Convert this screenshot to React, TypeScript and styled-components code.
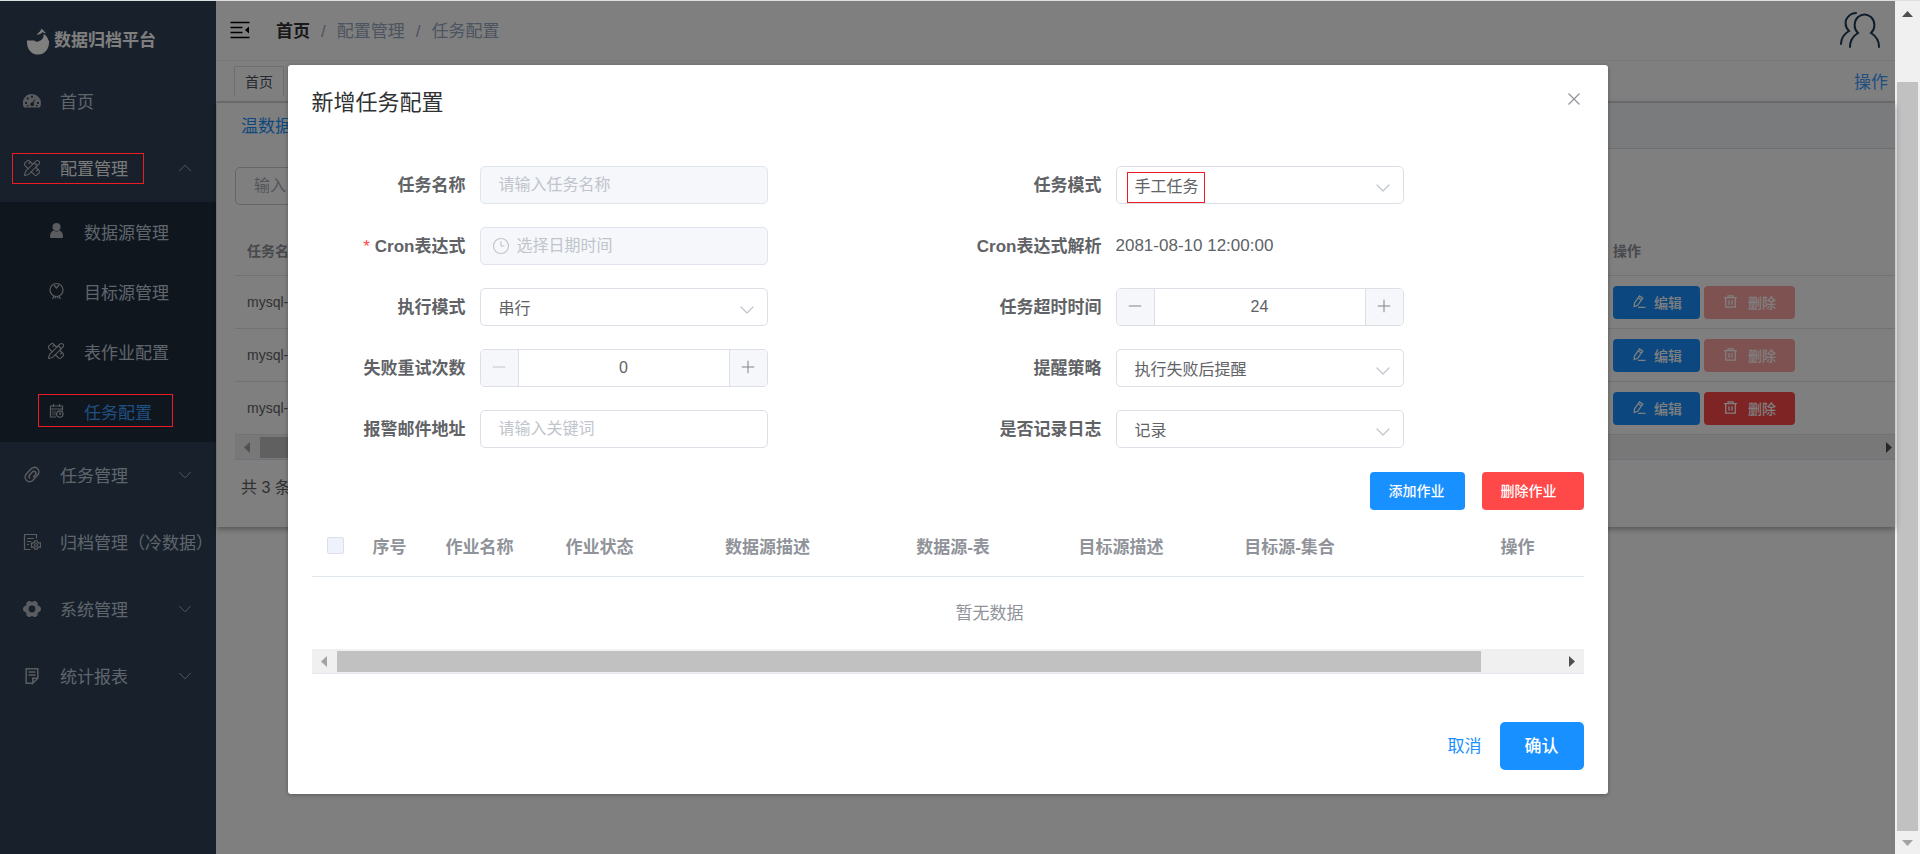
import React from "react";
import styled, { createGlobalStyle, css } from "styled-components";
import { ChevronDown, ChevronUp, PencilRuler, Minus, Plus, Clock3 } from "lucide-react";

const GlobalStyle = createGlobalStyle`
  * { box-sizing: border-box; }
  body {
    margin: 0;
    background: #dcdfdf;
    font-family: "Liberation Sans", "Noto Sans CJK SC", sans-serif;
    font-size: 17px;
    color: #606266;
  }
  button, input, select { font-family: inherit; margin: 0; }
  button { cursor: pointer; }
  a { text-decoration: none; }
  svg { display: block; flex: none; }
`;

/* ---------- page frame ---------- */

const Frame = styled.div`
  display: flex;
  min-height: 100vh;
  padding-top: 1px;
`;

const Viewport = styled.div`
  position: relative;
  flex: 1;
  min-width: 0;
  display: flex;
  background: #fff;
`;

const PageScroll = styled.div`
  width: 25px;
  display: flex;
  flex-direction: column;
  align-items: center;
  padding: 10px 2px 8px;
  background: #f0f0f0;
`;

const PageThumb = styled.div`
  width: 100%;
  flex: 1;
  margin: 65px 0 9px;
  background: #c1c1c1;
`;

const Mark = styled.span<{ $left: number; $top: number; $width: number; $height: number }>`
  position: absolute;
  z-index: 20;
  left: ${(p) => p.$left}px;
  top: ${(p) => p.$top}px;
  width: ${(p) => p.$width}px;
  height: ${(p) => p.$height}px;
  border: 1px solid #ed1c24;
  pointer-events: none;
`;

/* ---------- sidebar ---------- */

const Sidebar = styled.nav`
  width: 216px;
  flex: none;
  background: #304156;
`;

const Logo = styled.div`
  display: flex;
  align-items: center;
  gap: 4px;
  height: 67px;
  padding: 12px 0 0 27px;
  line-height: 26px;
  font-weight: 700;
  color: #fff;
  & > svg { align-self: flex-start; margin-top: 15px; }
`;

const MenuList = styled.ul`
  margin: 0;
  padding: 0;
  list-style: none;
`;

const SubList = styled(MenuList)`
  background: #1f2d3d;
`;

const MenuLink = styled.a<{ $sub?: boolean; $tone?: "open" | "active" }>`
  position: relative;
  display: flex;
  align-items: center;
  height: ${(p) => (p.$sub ? 60 : 67)}px;
  padding: 0 20px 2px ${(p) => (p.$sub ? 47 : 23)}px;
  color: ${(p) => (p.$tone === "active" ? "#409eff" : p.$tone === "open" ? "#f4f4f5" : "#bfcbd9")};
  white-space: nowrap;
  & > svg { color: #b4b8be; }
`;

const MenuText = styled.span`
  flex: 1;
  padding-left: 19px;
`;

/* ---------- top bar ---------- */

const Main = styled.main`
  flex: 1;
  min-width: 0;
`;

const TopBar = styled.header`
  display: flex;
  align-items: center;
  height: 60px;
  padding: 0 15px 2px 14px;
  border-bottom: 1px solid #f0f1f2;
`;

const IconButton = styled.button`
  display: flex;
  padding: 0;
  border: 0;
  background: none;
  color: inherit;
`;

const Crumbs = styled.div`
  flex: 1;
  display: flex;
  align-items: baseline;
  gap: 11px;
  padding-left: 26px;
  color: #97a8be;
`;

const CrumbHome = styled.a`
  font-weight: 700;
  color: #303133;
`;

const TabBar = styled.div`
  display: flex;
  justify-content: space-between;
  height: 42px;
  padding: 5px 7px 0 18px;
  border-bottom: 2px solid #dfe0e6;
`;

const PageTab = styled.a`
  height: 30px;
  padding: 0 10px;
  border: 1px solid #d8dce5;
  border-bottom: 0;
  font-size: 14px;
  line-height: 31px;
  color: #495060;
`;

const BlueLink = styled.a`
  line-height: 34px;
  color: #409eff;
`;

/* ---------- background card ---------- */

const Card = styled.section`
  border-left: 1px solid #dcdfe6;
  box-shadow: 0 2px 6px rgba(0, 0, 0, 0.35);
`;

const CardTabs = styled.div`
  height: 46px;
  border-bottom: 1px solid #dcdfe6;
  background: #f5f7fa;
`;

const CardTab = styled.a`
  display: block;
  width: 160px;
  height: 46px;
  padding-left: 24px;
  background: #fff;
  line-height: 48px;
  color: #1890ff;
`;

const CardBody = styled.div`
  padding: 18px 0 0 18px;
`;

const controlBox = css`
  width: 100%;
  height: 38px;
  border: 1px solid #dcdfe6;
  border-radius: 5px;
  background: #fff;
  font-size: 16px;
  color: #606266;
  outline: 0;
  &::placeholder { color: #c0c4cc; opacity: 1; }
`;

const SearchInput = styled.input`
  ${controlBox}
  display: block;
  width: 240px;
  padding: 0 18px;
  border-color: #c6cad2;
  &::placeholder { color: #a8abb2; }
`;

const TaskTable = styled.table`
  width: 100%;
  margin-top: 22px;
  border-collapse: separate;
  border-spacing: 0;
  table-layout: fixed;
  font-size: 14px;
  text-align: left;
  th { height: 49px; padding: 0 12px 2px; border-bottom: 1px solid #dfe6ec; color: #909399; font-weight: 700; }
  td { height: 53px; padding: 0 12px; border-bottom: 1px solid #dfe6ec; }
  th:last-child { width: 297px; padding: 0 15px 2px; }
  td:last-child { padding: 0 15px; }
`;

const ButtonRow = styled.div`
  display: flex;
  gap: 4px;
`;

const RowButton = styled.button<{ $danger?: boolean }>`
  display: flex;
  align-items: center;
  gap: ${(p) => (p.$danger ? 11 : 8)}px;
  height: 33px;
  padding: 0 ${(p) => (p.$danger ? 19 : 18)}px 1px 20px;
  border: 0;
  border-radius: 4px;
  background: ${(p) => (p.$danger ? "#ff4949" : "#1890ff")};
  color: #fff;
  font-size: 14px;
  font-weight: 500;
  &:disabled { background: #ffa4a4; }
`;

const PageInfo = styled.p`
  margin: 0;
  height: 67px;
  padding: 17px 6px 0;
  font-size: 16px;
  line-height: 22px;
`;

/* ---------- horizontal scroll bar ---------- */

const HScroll = styled.div<{ $end: number }>`
  display: flex;
  align-items: center;
  justify-content: space-between;
  height: 25px;
  padding: 0 ${(p) => p.$end}px 0 9px;
  border-bottom: 1px solid #e4e7f4;
  background: #f0f0f0;
`;

const HTrack = styled.div`
  flex: 1;
  margin: 0 27px 0 10px;
`;

const HThumb = styled.div<{ $share: number }>`
  width: ${(p) => p.$share}%;
  height: 21px;
  background: #c1c1c1;
`;

/* ---------- dialog ---------- */

const Overlay = styled.div`
  position: absolute;
  inset: 0;
  z-index: 10;
  padding: 64px 24px 24px;
  background: rgba(0, 0, 0, 0.5);
`;

const Dialog = styled.div`
  max-width: 1320px;
  margin: 0 auto;
  padding: 24px;
  border-radius: 3px;
  background: #fff;
  box-shadow: 0 1px 4px rgba(0, 0, 0, 0.3);
`;

const DialogHead = styled.div`
  display: flex;
  justify-content: space-between;
  align-items: flex-start;
  height: 77px;
  color: #909399;
`;

const DialogTitle = styled.h2`
  margin: 0;
  font-size: 22px;
  line-height: 27px;
  font-weight: 400;
  color: #303133;
`;

const Form = styled.form`
  display: grid;
  grid-template-columns: 1fr 1fr;
  row-gap: 23px;
`;

const Field = styled.div`
  display: flex;
  align-items: center;
  height: 38px;
`;

const FieldLabel = styled.label<{ $required?: boolean }>`
  width: 168px;
  padding: 0 14px 4px 0;
  text-align: right;
  font-weight: 700;
  white-space: nowrap;
  ${(p) => p.$required && css`&::before { content: "*"; margin-right: 5px; color: #ff4949; font-weight: 400; }`}
`;

const Control = styled.div`
  position: relative;
  width: 288px;
  & > svg { position: absolute; top: 10px; color: #c0c4cc; pointer-events: none; }
`;

const TextInput = styled.input<{ $icon?: boolean }>`
  ${controlBox}
  display: block;
  padding: 0 18px 0 ${(p) => (p.$icon ? 36 : 18)}px;
  &:disabled { background: #f5f7fa; border-color: #dfe4ed; }
`;

const SelectBox = styled.select`
  ${controlBox}
  display: block;
  appearance: none;
  padding: 2px 36px 0 18px;
`;

const SelectIcon = styled(ChevronDown)`
  right: 9px;
`;

const ClockIcon = styled(Clock3)`
  left: 12px;
`;

const Stepper = styled.div`
  display: flex;
  width: 288px;
  height: 38px;
  border: 1px solid #dcdfe6;
  border-radius: 5px;
  overflow: hidden;
`;

const StepButton = styled.button<{ $side: "left" | "right" }>`
  display: flex;
  align-items: center;
  justify-content: center;
  width: 38px;
  padding: 0 0 2px;
  border: 0;
  border-${(p) => (p.$side === "left" ? "right" : "left")}: 1px solid #dcdfe6;
  background: #f5f7fa;
  color: #808388;
  &:disabled { color: #c0c4cc; }
`;

const StepInput = styled.input`
  flex: 1;
  min-width: 0;
  padding: 0;
  border: 0;
  outline: 0;
  background: #fff;
  font-size: 16px;
  text-align: center;
  color: #606266;
`;

const Actions = styled.div`
  display: flex;
  justify-content: flex-end;
  gap: 17px;
  margin-top: 24px;
`;

const JobButton = styled.button<{ $danger?: boolean }>`
  height: 38px;
  padding: 0 ${(p) => (p.$danger ? 27 : 20)}px 2px 19px;
  border: 0;
  border-radius: 4px;
  background: ${(p) => (p.$danger ? "#ff4949" : "#1890ff")};
  color: #fff;
  font-size: 14px;
  font-weight: 500;
`;

const TableClip = styled.div`
  margin-top: 8px;
  overflow: hidden;
`;

const JobTable = styled.table`
  width: 1356px;
  border-collapse: separate;
  border-spacing: 0;
  table-layout: fixed;
  color: #909399;
  th { height: 59px; padding: 0 0 3px; border-bottom: 1px solid #dfe6ec; text-align: center; font-weight: 700; }
  td { height: 72px; padding: 0 0 4px; text-align: center; }
`;

const CheckBox = styled.input`
  appearance: none;
  display: block;
  width: 17px;
  height: 17px;
  margin: 0 auto;
  border: 1px solid #dcdfe6;
  border-radius: 2px;
  background: #edf2fc;
`;

const DialogFoot = styled.div`
  display: flex;
  justify-content: flex-end;
  align-items: center;
  gap: 18px;
  margin-top: 48px;
`;

const CancelButton = styled.button`
  padding: 0 0 4px;
  border: 0;
  background: none;
  color: #1890ff;
  font-size: 17px;
`;

const ConfirmButton = styled.button`
  width: 84px;
  height: 48px;
  padding: 0 0 4px;
  border: 0;
  border-radius: 5px;
  background: #1890ff;
  color: #fff;
  font-size: 17px;
  font-weight: 500;
`;

/* ---------- icons ---------- */

const line = { fill: "none", stroke: "currentColor", strokeWidth: 1.2 } as const;

const BowlLogo = () => (
  <svg width="23" height="27" viewBox="0 0 23 27" fill="currentColor">
    <path d="M0 12.5h7.500c.5 1.500 3 1.500 5.500.2C16 11.200 17 8.500 16.500 6c2.500 1 4.300 3.500 4.800 6.500H22c.6 8-4 14-11 14s-11.500-6-11-14z" />
    <path d="M10 7c.5-2.500 3.500-2.500 4.500-6.500l4.500 4.700-2.500-.4-1-.8c-1 2-3.300 2.200-5.500 3z" />
  </svg>
);

const GaugeIcon = () => (
  <svg width="18" height="16" viewBox="0 0 18 16">
    <path fill="currentColor" fillRule="evenodd" d="M9 1a9 9 0 0 1 9 9c0 1.700-.4 3.200-1.100 4.600H1.100A9 9 0 0 1 9 1zM8 2.700v2h2v-2zM3.800 4.600v2h2v-2zM2 9v2h2V9zM14 9v2h2V9zM12.800 5l-3.400 4.300a2 2 0 1 0 1.300.7zM3.600 12v1.300h2V12zM12.800 12v1.300h2V12z" />
  </svg>
);

const PersonIcon = () => (
  <svg width="18" height="18" viewBox="0 0 18 18" fill="currentColor">
    <circle cx="9.500" cy="5" r="4" />
    <path d="M3 14.500c0-3.500 1.500-5.500 3.500-6 2 1.200 4 1.200 6 0 2 .5 3.500 2.500 3.500 6 0 1-.6 1.500-1.500 1.500h-10c-.9 0-1.500-.5-1.500-1.500z" />
  </svg>
);

const TargetIcon = () => (
  <svg width="18" height="18" viewBox="0 0 18 18" {...line}>
    <circle cx="9.500" cy="8" r="6.500" />
    <path d="M7 3l2.500 3L12 3M7 14l-1.500 3M8.500 14.300l-.5 2M12 14l1.500 3M10.500 14.300l.5 2" />
  </svg>
);

const CalendarIcon = () => (
  <svg width="18" height="18" viewBox="0 0 18 18" {...line}>
    <path d="M9 15H3.500V4h12v4.500M3.500 7h12M6.500 2v3M12.500 2v3" />
    <rect x="5" y="8.500" width="4" height="5" fill="currentColor" fillOpacity=".4" stroke="none" />
    <circle cx="12.800" cy="12" r="3.200" />
    <path d="M12.800 10.200v2h1.500" />
  </svg>
);

const ClipIcon = () => (
  <svg width="18" height="18" viewBox="0 0 18 18" {...line} strokeWidth="1.500">
    <rect x="4.400" y=".5" width="9.200" height="16" rx="4.600" transform="rotate(42 9 8.500)" />
    <path d="M7 12.300c-1.400-.9-1.300-2.400-.4-3.400l2.500-2.700c1-1.100 2.400-1.200 3.300-.3.900.9.800 2-.1 3l-2.200 2.400" />
  </svg>
);

const ArchiveIcon = () => (
  <svg width="18" height="18" viewBox="0 0 18 18" {...line}>
    <path d="M7.500 16.500h-6v-15h12v4M4 5.500h7M4 8.500h4M4 11.500h2" />
    <circle cx="13" cy="12" r="1.500" />
    <path d="M11.800 7.800h2.400l.4 1.500 1.500.8 1.300-.4.1 2.300-.1 2.300-1.300-.4-1.500.8-.4 1.500h-2.400l-.4-1.500-1.500-.8-1.300.4-.1-2.300.1-2.300 1.300.4 1.500-.8z" />
  </svg>
);

const GearIcon = () => (
  <svg width="18" height="18" viewBox="0 0 18 18">
    <path fill="currentColor" fillRule="evenodd" d="M5.600 1h1.700c.8 1.200 2.600 1.200 3.400 0h1.700c1.200.5 2 1.300 2.300 2.200-.4 1.400.4 2.800 2 3 .9.800 1.300 1.800 1.300 2.800s-.4 2-1.300 2.800c-1.600.2-2.400 1.600-2 3-.3.900-1.100 1.700-2.300 2.200h-1.700c-.8-1.200-2.600-1.200-3.400 0H5.600c-1.200-.5-2-1.300-2.300-2.200.4-1.400-.4-2.800-2-3C.4 11 0 10 0 9s.4-2 1.300-2.800c1.600-.2 2.400-1.600 2-3C3.600 2.300 4.400 1.500 5.600 1zM9 5.600a3.400 3.400 0 1 0 0 6.800 3.400 3.400 0 0 0 0-6.800z" />
  </svg>
);

const NoteIcon = () => (
  <svg width="18" height="18" viewBox="0 0 18 18" {...line} strokeWidth="1.500">
    <path d="M9.500 16.300H3.200V1.700h11.600v9.500l-5 5v-5h5M5.500 5h7M5.500 8h7" />
  </svg>
);

const FoldIcon = () => (
  <svg width="20" height="18" viewBox="0 0 20 18">
    <path stroke="#000" strokeWidth="1.600" d="M.5 1.500h19M.5 6.500h12M.5 11.500h12M.5 16.500h19" />
    <path d="M19 5.500v7L15 9z" />
  </svg>
);

const UsersIcon = () => (
  <svg width="40" height="36" viewBox="0 0 40 36" fill="none" stroke="#1f3a57" strokeWidth="2" strokeLinecap="round">
    <path d="M10 35c0-6 3-11 8-14-5-5-4-12 0-16 4-3 9-3 13 0 4 4 5 11 0 16 5 3 8 8 8 14M16 1c-5 0-8 3-10 7-1 4 0 8 3 11-5 3-8 8-8 13" />
  </svg>
);

const CloseIcon = () => (
  <svg width="20" height="20" viewBox="0 0 20 20" {...line}>
    <path d="M4.500 4.500l11 11M15.500 4.500l-11 11" />
  </svg>
);

const PenIcon = () => (
  <svg width="13" height="13" viewBox="0 0 13 13" fill="none" stroke="currentColor" strokeWidth="1.300">
    <path d="M1.200 11.500l.3-3.500L6.500.9l3.300 2.200L4.600 10.300zM5 12.300h7.500M5.200 2.800l3.200 2.200" />
  </svg>
);

const TrashIcon = () => (
  <svg width="13" height="13" viewBox="0 0 13 13" fill="none" stroke="currentColor" strokeWidth="1.300">
    <path d="M0 2.700h13M4 2.700V.8h5v1.900M1.700 2.700v9.500h9.600V2.700M5 5.300v4.500M8 5.300v4.500" />
  </svg>
);

const Triangle = ({ dir, color }: { dir: "up" | "down" | "left" | "right"; color: string }) => {
  const shapes = { up: "0,6 11,6 5.5,0", down: "0,0 11,0 5.5,6", left: "6,0 6,11 0,5.5", right: "0,0 0,11 6,5.5" };
  const flat = dir === "up" || dir === "down";
  return (
    <svg width={flat ? 11 : 6} height={flat ? 6 : 11}>
      <polygon points={shapes[dir]} fill={color} />
    </svg>
  );
};

/* ---------- composed parts ---------- */

const HorizontalBar = ({ share, end }: { share: number; end: number }) => (
  <HScroll $end={end}>
    <Triangle dir="left" color="#a3a3a3" />
    <HTrack><HThumb $share={share} /></HTrack>
    <Triangle dir="right" color="#505050" />
  </HScroll>
);

const Choice = ({ id, value, marked }: { id: string; value: string; marked?: boolean }) => (
  <Control>
    <SelectBox id={id} defaultValue={value}>
      <option>{value}</option>
    </SelectBox>
    <SelectIcon size={24} strokeWidth={1.2} />
    {marked && <Mark $left={11} $top={6} $width={78} $height={31} />}
  </Control>
);

const NumberField = ({ id, start }: { id: string; start: number }) => {
  const [value, setValue] = React.useState(start);
  return (
    <Stepper>
      <StepButton type="button" $side="left" aria-label="减少" disabled={value <= 0} onClick={() => setValue(value - 1)}>
        <Minus size={20} strokeWidth={1.2} />
      </StepButton>
      <StepInput id={id} value={value} onChange={(e) => setValue(Number(e.target.value) || 0)} />
      <StepButton type="button" $side="right" aria-label="增加" onClick={() => setValue(value + 1)}>
        <Plus size={20} strokeWidth={1.2} />
      </StepButton>
    </Stepper>
  );
};

const lowerMenu = [
  { text: "任务管理", icon: <ClipIcon />, arrow: true },
  { text: "归档管理（冷数据）", icon: <ArchiveIcon />, arrow: false },
  { text: "系统管理", icon: <GearIcon />, arrow: true },
  { text: "统计报表", icon: <NoteIcon />, arrow: true },
];

const subMenu = [
  { text: "数据源管理", icon: <PersonIcon /> },
  { text: "目标源管理", icon: <TargetIcon /> },
  { text: "表作业配置", icon: <PencilRuler size={18} strokeWidth={1.5} /> },
  { text: "任务配置", icon: <CalendarIcon />, active: true },
];

const jobColumns = [
  { text: "序号", width: 60 },
  { text: "作业名称", width: 120 },
  { text: "作业状态", width: 120 },
  { text: "数据源描述", width: 216 },
  { text: "数据源-表", width: 155 },
  { text: "目标源描述", width: 181 },
  { text: "目标源-集合", width: 156 },
  { text: "操作", width: 300 },
];

export default function App() {
  return (
    <>
      <GlobalStyle />
      <Frame>
        <Viewport>
          <Sidebar>
            <Logo><BowlLogo />数据归档平台</Logo>
            <MenuList>
              <li><MenuLink href="#home"><GaugeIcon /><MenuText>首页</MenuText></MenuLink></li>
              <li>
                <MenuLink href="#config" $tone="open">
                  <PencilRuler size={18} strokeWidth={1.5} />
                  <MenuText>配置管理</MenuText>
                  <ChevronUp size={22} strokeWidth={1} />
                  <Mark $left={12} $top={18} $width={132} $height={31} />
                </MenuLink>
                <SubList>
                  {subMenu.map((m) => (
                    <li key={m.text}>
                      <MenuLink href="#sub" $sub $tone={m.active ? "active" : undefined}>
                        {m.icon}
                        <MenuText>{m.text}</MenuText>
                        {m.active && <Mark $left={38} $top={12} $width={135} $height={33} />}
                      </MenuLink>
                    </li>
                  ))}
                </SubList>
              </li>
              {lowerMenu.map((m) => (
                <li key={m.text}>
                  <MenuLink href="#menu">
                    {m.icon}
                    <MenuText>{m.text}</MenuText>
                    {m.arrow && <ChevronDown size={22} strokeWidth={1} />}
                  </MenuLink>
                </li>
              ))}
            </MenuList>
          </Sidebar>

          <Main>
            <TopBar>
              <IconButton aria-label="收起菜单"><FoldIcon /></IconButton>
              <Crumbs>
                <CrumbHome href="#home">首页</CrumbHome>
                <span>/</span>
                <span>配置管理</span>
                <span>/</span>
                <span>任务配置</span>
              </Crumbs>
              <IconButton aria-label="用户"><UsersIcon /></IconButton>
            </TopBar>
            <TabBar>
              <PageTab href="#home">首页</PageTab>
              <BlueLink href="#operate">操作</BlueLink>
            </TabBar>

            <Card>
              <CardTabs><CardTab href="#warm">温数据</CardTab></CardTabs>
              <CardBody>
                <SearchInput placeholder="输入" aria-label="输入" />
                <TaskTable>
                  <thead>
                    <tr><th>任务名</th><th>操作</th></tr>
                  </thead>
                  <tbody>
                    {[true, true, false].map((locked, i) => (
                      <tr key={i}>
                        <td>mysql-</td>
                        <td>
                          <ButtonRow>
                            <RowButton><PenIcon />编辑</RowButton>
                            <RowButton $danger disabled={locked}><TrashIcon />删除</RowButton>
                          </ButtonRow>
                        </td>
                      </tr>
                    ))}
                  </tbody>
                </TaskTable>
                <HorizontalBar share={80} end={3} />
                <PageInfo>共 3 条</PageInfo>
              </CardBody>
            </Card>
          </Main>

          <Overlay>
            <Dialog role="dialog" aria-modal="true" aria-labelledby="dialog-title">
              <DialogHead>
                <DialogTitle id="dialog-title">新增任务配置</DialogTitle>
                <IconButton aria-label="关闭"><CloseIcon /></IconButton>
              </DialogHead>

              <Form>
                <Field>
                  <FieldLabel htmlFor="name">任务名称</FieldLabel>
                  <Control><TextInput id="name" placeholder="请输入任务名称" disabled /></Control>
                </Field>
                <Field>
                  <FieldLabel htmlFor="mode">任务模式</FieldLabel>
                  <Choice id="mode" value="手工任务" marked />
                </Field>
                <Field>
                  <FieldLabel htmlFor="cron" $required>Cron表达式</FieldLabel>
                  <Control>
                    <TextInput id="cron" placeholder="选择日期时间" $icon disabled />
                    <ClockIcon size={18} strokeWidth={1.5} />
                  </Control>
                </Field>
                <Field>
                  <FieldLabel htmlFor="parsed">Cron表达式解析</FieldLabel>
                  <output id="parsed">2081-08-10 12:00:00</output>
                </Field>
                <Field>
                  <FieldLabel htmlFor="run">执行模式</FieldLabel>
                  <Choice id="run" value="串行" />
                </Field>
                <Field>
                  <FieldLabel htmlFor="timeout">任务超时时间</FieldLabel>
                  <NumberField id="timeout" start={24} />
                </Field>
                <Field>
                  <FieldLabel htmlFor="retry">失败重试次数</FieldLabel>
                  <NumberField id="retry" start={0} />
                </Field>
                <Field>
                  <FieldLabel htmlFor="remind">提醒策略</FieldLabel>
                  <Choice id="remind" value="执行失败后提醒" />
                </Field>
                <Field>
                  <FieldLabel htmlFor="mail">报警邮件地址</FieldLabel>
                  <Control><TextInput id="mail" placeholder="请输入关键词" /></Control>
                </Field>
                <Field>
                  <FieldLabel htmlFor="log">是否记录日志</FieldLabel>
                  <Choice id="log" value="记录" />
                </Field>
              </Form>

              <Actions>
                <JobButton>添加作业</JobButton>
                <JobButton $danger>删除作业</JobButton>
              </Actions>

              <TableClip>
                <JobTable>
                  <colgroup>
                    <col width={48} />
                    {jobColumns.map((c) => <col key={c.text} width={c.width} />)}
                  </colgroup>
                  <thead>
                    <tr>
                      <th><CheckBox type="checkbox" aria-label="全选" disabled /></th>
                      {jobColumns.map((c) => <th key={c.text}>{c.text}</th>)}
                    </tr>
                  </thead>
                  <tbody>
                    <tr><td colSpan={9}>暂无数据</td></tr>
                  </tbody>
                </JobTable>
                <HorizontalBar share={95} end={9} />
              </TableClip>

              <DialogFoot>
                <CancelButton>取消</CancelButton>
                <ConfirmButton>确认</ConfirmButton>
              </DialogFoot>
            </Dialog>
          </Overlay>
        </Viewport>
        <PageScroll>
          <Triangle dir="up" color="#505050" />
          <PageThumb />
          <Triangle dir="down" color="#a3a3a3" />
        </PageScroll>
      </Frame>
    </>
  );
}
